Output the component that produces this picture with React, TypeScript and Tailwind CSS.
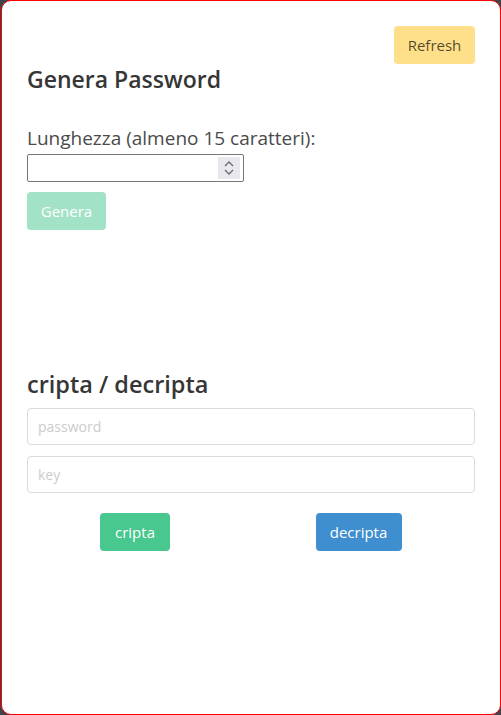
import React from "react";

export default function App() {
  return (
    <div className="w-[501px] h-[715px] bg-[#3d424b]" style={{ fontFamily: '"Open Sans", "Noto Sans", sans-serif' }}>
      <div className="h-[715px] ml-[1px] w-[500px] bg-white border border-[#ff0000] rounded-[10px] px-[25px] pt-[25px] flex flex-col">
        <div className="flex justify-end">
          <button className="h-[38px] w-[81px] rounded-[4px] bg-[#ffe08a] text-[15px] text-[rgba(0,0,0,0.7)]">Refresh</button>
        </div>
        <h1 className="mt-0 text-[23px] font-semibold text-[#363636] leading-[30px]">Genera Password</h1>
        <label className="mt-[31px] text-[19px] text-[#4a4a4a] leading-[26px]">Lunghezza (almeno 15 caratteri):</label>
        <div className="mt-[3px]">
          <div className="w-[217px] h-[28px] border border-[#767676] rounded-[2px] flex justify-end items-center pr-[3px]">
            <div className="w-[22px] h-[22px] bg-[#e9e9ed] flex flex-col items-center justify-center">
              <svg width="12" height="18" viewBox="0 0 12 18" fill="none" stroke="#6b6b73" strokeWidth="1.3">
                <path d="M2 7 L6 3 L10 7" />
                <path d="M2 11 L6 15 L10 11" />
              </svg>
            </div>
          </div>
        </div>
        <div className="mt-[10px]">
          <button className="h-[38px] w-[79px] rounded-[4px] bg-[#48c78e] opacity-50 text-white text-[15px]">Genera</button>
        </div>
        <h2 className="mt-[139px] text-[23.5px] font-semibold text-[#363636] leading-[30px]">cripta / decripta</h2>
        <input className="mt-[9px] h-[37px] w-full border border-[#dbdbdb] rounded-[4px] px-[10px] text-[14px] placeholder:text-[#cccccc] outline-none" placeholder="password" />
        <input className="mt-[11px] h-[37px] w-full border border-[#dbdbdb] rounded-[4px] px-[10px] text-[14px] placeholder:text-[#cccccc] outline-none" placeholder="key" />
        <div className="mt-[20px] ml-[-4px] mr-[4px] grid grid-cols-2">
          <div className="flex justify-center">
            <button className="h-[38px] w-[70px] rounded-[4px] bg-[#48c78e] text-white text-[15px]">cripta</button>
          </div>
          <div className="flex justify-center">
            <button className="h-[38px] w-[86px] ml-[-1px] rounded-[4px] bg-[#3e8ed0] text-white text-[15px]">decripta</button>
          </div>
        </div>
      </div>
    </div>
  );
}
